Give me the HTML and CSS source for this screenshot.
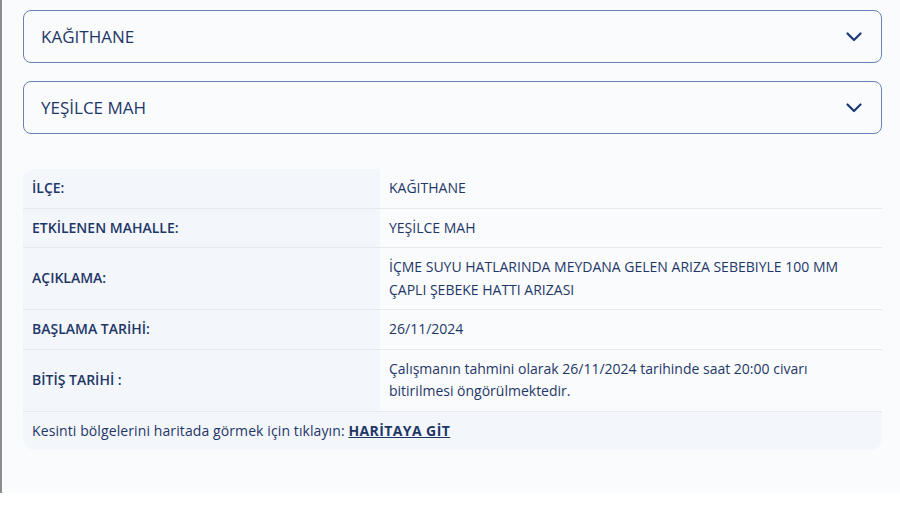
FILE: index.html
```html
<!DOCTYPE html>
<html lang="tr">
<head>
  <meta charset="UTF-8">
  <meta name="viewport" content="width=device-width, initial-scale=1.0">
  <title>Arıza Kesinti Bilgisi</title>
  <link rel="stylesheet" href="styles.css">
</head>
<body>

  <div class="panel">
    <div class="select">
      <span>KAĞITHANE</span>
      <svg class="chevron" width="16" height="10" viewBox="0 0 16 10"><path d="M1.5 1.5 L8 8 L14.5 1.5" fill="none" stroke="#1d3a74" stroke-width="2.2" stroke-linecap="round" stroke-linejoin="round"/></svg>
    </div>
    <div class="select">
      <span>YEŞİLCE MAH</span>
      <svg class="chevron" width="16" height="10" viewBox="0 0 16 10"><path d="M1.5 1.5 L8 8 L14.5 1.5" fill="none" stroke="#1d3a74" stroke-width="2.2" stroke-linecap="round" stroke-linejoin="round"/></svg>
    </div>

    <div class="info">
      <div class="row">
        <div class="label">İLÇE:</div>
        <div class="value">KAĞITHANE</div>
      </div>
      <div class="row">
        <div class="label">ETKİLENEN MAHALLE:</div>
        <div class="value">YEŞİLCE MAH</div>
      </div>
      <div class="row">
        <div class="label">AÇIKLAMA:</div>
        <div class="value">İÇME SUYU HATLARINDA MEYDANA GELEN ARIZA SEBEBIYLE 100 MM ÇAPLI ŞEBEKE HATTI ARIZASI</div>
      </div>
      <div class="row">
        <div class="label">BAŞLAMA TARİHİ:</div>
        <div class="value">26/11/2024</div>
      </div>
      <div class="row">
        <div class="label">BİTİŞ TARİHİ :</div>
        <div class="value">Çalışmanın tahmini olarak 26/11/2024 tarihinde saat 20:00 civarı bitirilmesi öngörülmektedir.</div>
      </div>
      <div class="map-row">
        Kesinti bölgelerini haritada görmek için tıklayın: <a href="#">HARİTAYA GİT</a>
      </div>
    </div>
  </div>

</body>
</html>
```

FILE: styles.css
```css
body {
  margin: 0;
  font-family: "Open Sans", Lato, sans-serif;
  color: #1f3767;
  background-color: #ffffff;
}
.panel {
  border-left: 2px solid #8c8c8c;
  background-color: #f9fbfd;
  padding: 10px 18px 43px 21px;
}
.select {
  display: flex;
  align-items: center;
  justify-content: space-between;
  height: 51px;
  padding: 0 19px 0 17px;
  border: 1px solid #6882b3;
  border-radius: 8px;
  font-size: 17px;
  font-weight: 500;
  margin-bottom: 18px;
}
.chevron {
  display: block;
}
.info {
  margin-top: 35px;
  border-radius: 12px;
  overflow: hidden;
  font-size: 14px;
}
.row {
  display: flex;
  border-bottom: 1px solid #e6eaf0;
}
.label {
  width: 339px;
  flex-shrink: 0;
  display: flex;
  align-items: center;
  padding: 8px 9px;
  background-color: #f3f6fb;
  font-weight: 600;
  line-height: 22.5px;
}
.value {
  flex: 1;
  padding: 8px 12px 8px 9px;
  line-height: 22.5px;
}
.map-row {
  background-color: #f3f6fb;
  padding: 8px 9px;
  line-height: 22px;
  letter-spacing: 0.1px;
}
.map-row a {
  color: #1f3767;
  font-weight: bold;
  letter-spacing: 0.4px;
}
```
